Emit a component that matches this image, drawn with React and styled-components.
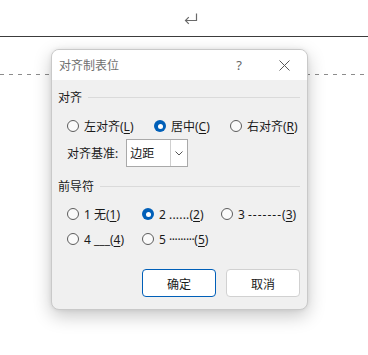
import React from "react";
import styled, { createGlobalStyle } from "styled-components";

const Global = createGlobalStyle`
  html, body { margin: 0; padding: 0; background: #fff; }
  body { font-family: "Noto Sans", "Noto Sans CJK SC", sans-serif; }
  * { box-sizing: border-box; }
`;

const Page = styled.div`
  position: relative;
  width: 368px;
  height: 355px;
  background: #fff;
  overflow: hidden;
`;

const TopBar = styled.div`
  height: 37px;
  display: flex;
  justify-content: center;
  padding: 13px 0 0 14px;
  border-bottom: 1px solid #3c3c3c;
`;

const DashedRule = styled.div`
  margin-top: 37px;
  height: 1px;
  background: repeating-linear-gradient(to right, #8c8c8c 0 4px, transparent 4px 9px);
`;

const Dialog = styled.div`
  position: absolute;
  left: 51px;
  top: 49px;
  width: 257px;
  height: 261px;
  border: 1px solid #c9c9c9;
  border-radius: 8px;
  overflow: hidden;
  background: #f0f0f0;
  box-shadow: 0 6px 18px rgba(0, 0, 0, 0.22), 0 0 4px rgba(0, 0, 0, 0.08);
  display: flex;
  flex-direction: column;
`;

const TitleBar = styled.div`
  height: 30px;
  background: #fff;
  display: flex;
  align-items: center;
  padding-left: 7px;
  flex-shrink: 0;
`;

const Title = styled.div`
  flex: 1;
  font-size: 12px;
  color: #6f6f6f;
  line-height: 17px;
`;

const TitleButton = styled.div`
  width: ${(p) => p.$w}px;
  margin-left: ${(p) => p.$ml || 0}px;
  height: 30px;
  display: flex;
  align-items: center;
  justify-content: center;
  font-family: "Noto Sans", sans-serif;
  font-size: 13px;
  color: #666;
`;

const Body = styled.div`
  flex: 1;
  padding: 9px 7px 0 6px;
  display: flex;
  flex-direction: column;
`;

const SectionHeader = styled.div`
  display: flex;
  align-items: center;
  gap: 6px;
  font-size: 12px;
  line-height: 17px;
  color: #1a1a1a;
  margin-top: ${(p) => p.$mt || 0}px;
  &::after {
    content: "";
    flex: 1;
    height: 1px;
    background: #dadada;
  }
`;

const OptionGrid = styled.div`
  display: grid;
  grid-template-columns: ${(p) => p.$cols};
  row-gap: 7px;
  padding-left: 9px;
  margin-top: ${(p) => p.$mt}px;
`;

const Option = styled.label`
  display: flex;
  align-items: center;
  gap: 5px;
  height: 18px;
  font-size: 12px;
  color: #1a1a1a;
  white-space: nowrap;
  u { text-decoration: underline; text-underline-offset: 2px; }
`;

const Leader = styled.span`
  letter-spacing: ${(p) => p.$ls}px;
`;

const Radio = styled.span`
  width: 12px;
  height: 12px;
  border-radius: 50%;
  flex-shrink: 0;
  position: relative;
  border: ${(p) => (p.$checked ? "none" : "1px solid #5c5c5c")};
  background: ${(p) => (p.$checked ? "#005fb8" : "#fafafa")};
  &::after {
    content: "";
    display: ${(p) => (p.$checked ? "block" : "none")};
    position: absolute;
    left: 3.5px;
    top: 3.5px;
    width: 5px;
    height: 5px;
    border-radius: 50%;
    background: #fff;
  }
`;

const BaseRow = styled.div`
  display: flex;
  align-items: center;
  gap: 8px;
  padding-left: 9px;
  margin-top: 4px;
  font-size: 12px;
  color: #1a1a1a;
`;

const Select = styled.div`
  width: 62px;
  height: 28px;
  background: #fff;
  border: 1px solid #a9a9a9;
  display: flex;
  align-items: stretch;
`;

const SelectValue = styled.div`
  flex: 1;
  display: flex;
  align-items: center;
  padding-left: 3px;
  font-size: 12px;
`;

const SelectArrow = styled.div`
  width: 17px;
  border-left: 1px solid #cfcfcf;
  display: flex;
  align-items: center;
  justify-content: center;
`;

const Buttons = styled.div`
  display: flex;
  justify-content: flex-end;
  gap: 10px;
  margin-top: 21px;
`;

const Button = styled.button`
  width: 74px;
  height: 28px;
  background: #fff;
  border: 1px solid ${(p) => (p.$primary ? "#005fb8" : "#d1d1d1")};
  border-radius: 4px;
  font-family: "Noto Sans CJK SC", sans-serif;
  font-size: 12px;
  color: #1a1a1a;
  padding: 0;
`;

const RadioOption = ({ checked, children }) => (
  <Option>
    <Radio $checked={checked} />
    <span>{children}</span>
  </Option>
);

export default function App() {
  return (
    <Page>
      <Global />
      <TopBar>
        <svg width="14" height="12" viewBox="0 0 14 12" fill="none" stroke="#6a6a6a" strokeWidth="1.2">
          <path d="M12.5 0.5 V7.5 H1.5" />
          <path d="M4.8 4.2 L1.5 7.5 L4.8 10.8" />
        </svg>
      </TopBar>
      <DashedRule />
      <Dialog>
        <TitleBar>
          <Title>对齐制表位</Title>
          <TitleButton $w={30}>?</TitleButton>
          <TitleButton $w={46} $ml={7}>
            <svg width="11" height="11" viewBox="0 0 11 11" stroke="#5a5a5a" strokeWidth="1">
              <path d="M0.5 0.5 L10.5 10.5 M10.5 0.5 L0.5 10.5" />
            </svg>
          </TitleButton>
        </TitleBar>
        <Body>
          <SectionHeader>对齐</SectionHeader>
          <OptionGrid $cols="87px 76px auto" $mt={11}>
            <RadioOption>左对齐(<u>L</u>)</RadioOption>
            <RadioOption checked>居中(<u>C</u>)</RadioOption>
            <RadioOption>右对齐(<u>R</u>)</RadioOption>
          </OptionGrid>
          <BaseRow>
            <span>对齐基准:</span>
            <Select>
              <SelectValue>边距</SelectValue>
              <SelectArrow>
                <svg width="8" height="5" viewBox="0 0 8 5" fill="none" stroke="#555" strokeWidth="1">
                  <path d="M0.5 0.5 L4 4 L7.5 0.5" />
                </svg>
              </SelectArrow>
            </Select>
          </BaseRow>
          <SectionHeader $mt={11}>前导符</SectionHeader>
          <OptionGrid $cols="75px 79px auto" $mt={10}>
            <RadioOption>1 无(<u>1</u>)</RadioOption>
            <RadioOption checked>2 <Leader $ls={0.2}>......</Leader>(<u>2</u>)</RadioOption>
            <RadioOption>3 <Leader $ls={1}>-------</Leader>(<u>3</u>)</RadioOption>
            <RadioOption>4 ___(<u>4</u>)</RadioOption>
            <RadioOption>5 <Leader $ls={-0.4}>·········</Leader>(<u>5</u>)</RadioOption>
          </OptionGrid>
          <Buttons>
            <Button $primary>确定</Button>
            <Button>取消</Button>
          </Buttons>
        </Body>
      </Dialog>
    </Page>
  );
}
